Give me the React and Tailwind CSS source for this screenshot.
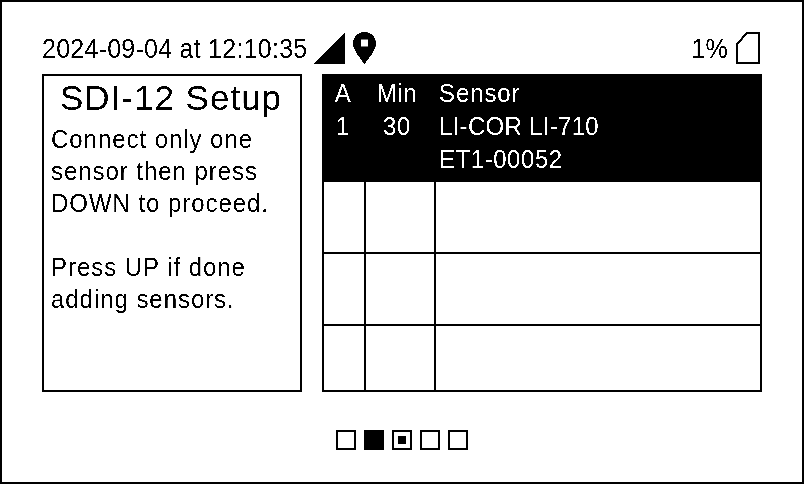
const sans = { fontFamily: '"Liberation Sans", Arial, sans-serif' };

function Signal() {
  return (
    <svg width="32" height="32" viewBox="0 0 32 32" shapeRendering="crispEdges" className="ml-[6px]">
      <polygon points="32,0 32,32 0,32" fill="#000" />
    </svg>
  );
}

function Pin() {
  return (
    <svg width="23" height="32" viewBox="0 0 23 32" className="ml-2">
      <path
        fillRule="evenodd"
        d="M11.5 0C5 0 0 5 0 11.5C0 18 7 26 11.5 32C16 26 23 18 23 11.5C23 5 18 0 11.5 0ZM8 7.5H15V14.5H8Z"
        fill="#000"
      />
    </svg>
  );
}

function Battery() {
  return (
    <svg width="24" height="32" viewBox="0 0 24 32" className="ml-2 mr-[2px]">
      <path d="M1 31V12L11 1H23V31Z" fill="none" stroke="#000" strokeWidth="2" />
    </svg>
  );
}

function Dot({ kind }) {
  if (kind === "fill") return <div className="w-5 h-5 bg-black" />;
  return (
    <div className="w-5 h-5 border-2 border-black flex items-center justify-center">
      {kind === "mark" && <div className="w-2 h-2 bg-black" />}
    </div>
  );
}

function Row({ h, border = true }) {
  return (
    <div className={`flex border-black ${border ? "border-b-2" : ""}`} style={{ height: h }}>
      <div className="w-[42px] border-r-2 border-black" />
      <div className="w-[70px] border-r-2 border-black" />
      <div className="flex-1" />
    </div>
  );
}

export default function App() {
  return (
    <div style={sans} className="w-[804px] h-[484px] border-2 border-black bg-white text-black px-10 pt-[30px] flex flex-col contrast-[12] grayscale">
      <div className="h-8 flex items-start">
        <span className="inline-block text-[25px] leading-[29px] tracking-[0.25px] mt-[1px] scale-y-[1.1] origin-top">2024-09-04 at 12:10:35</span>
        <Signal />
        <Pin />
        <span className="ml-auto inline-block text-[25px] leading-[29px] tracking-[0.25px] mt-[1px] scale-y-[1.1] origin-top">1%</span>
        <Battery />
      </div>
      <div className="mt-[10px] h-[318px] flex gap-5">
        <div className="w-[260px] border-2 border-black">
          <div className="text-center text-[35px] leading-[44px] tracking-[1px] h-[46px] pr-[2px]">SDI-12 Setup</div>
          <div className="pl-[7px] pt-[1px] text-[24px] leading-[29.09px] tracking-[0.95px] scale-y-[1.1] origin-top">
            <div>Connect only one</div>
            <div>sensor then press</div>
            <div>DOWN to proceed.</div>
            <div className="h-[29.09px]" />
            <div>Press UP if done</div>
            <div>adding sensors.</div>
          </div>
        </div>
        <div className="w-[440px] flex flex-col">
          <div className="h-[108px] bg-black text-white pt-[3px]">
            <div className="text-[24px] leading-[30px] tracking-[0.55px] grid grid-cols-[42px_66px_1fr] scale-y-[1.1] origin-top">
              <div className="text-center">A</div>
              <div className="text-center">Min</div>
              <div className="pl-[9px] tracking-[0.9px]">Sensor</div>
              <div className="text-center">1</div>
              <div className="text-center">30</div>
              <div className="pl-[9px] tracking-[0.3px]">LI-COR LI-710</div>
              <div />
              <div />
              <div className="pl-[9px]">ET1-00052</div>
            </div>
          </div>
          <div className="flex-1 border-x-2 border-black flex flex-col">
            <Row h={72} />
            <Row h={72} />
            <Row h={66} />
          </div>
        </div>
      </div>
      <div className="mt-[38px] flex justify-center gap-2">
        <Dot />
        <Dot kind="fill" />
        <Dot kind="mark" />
        <Dot />
        <Dot />
      </div>
    </div>
  );
}
